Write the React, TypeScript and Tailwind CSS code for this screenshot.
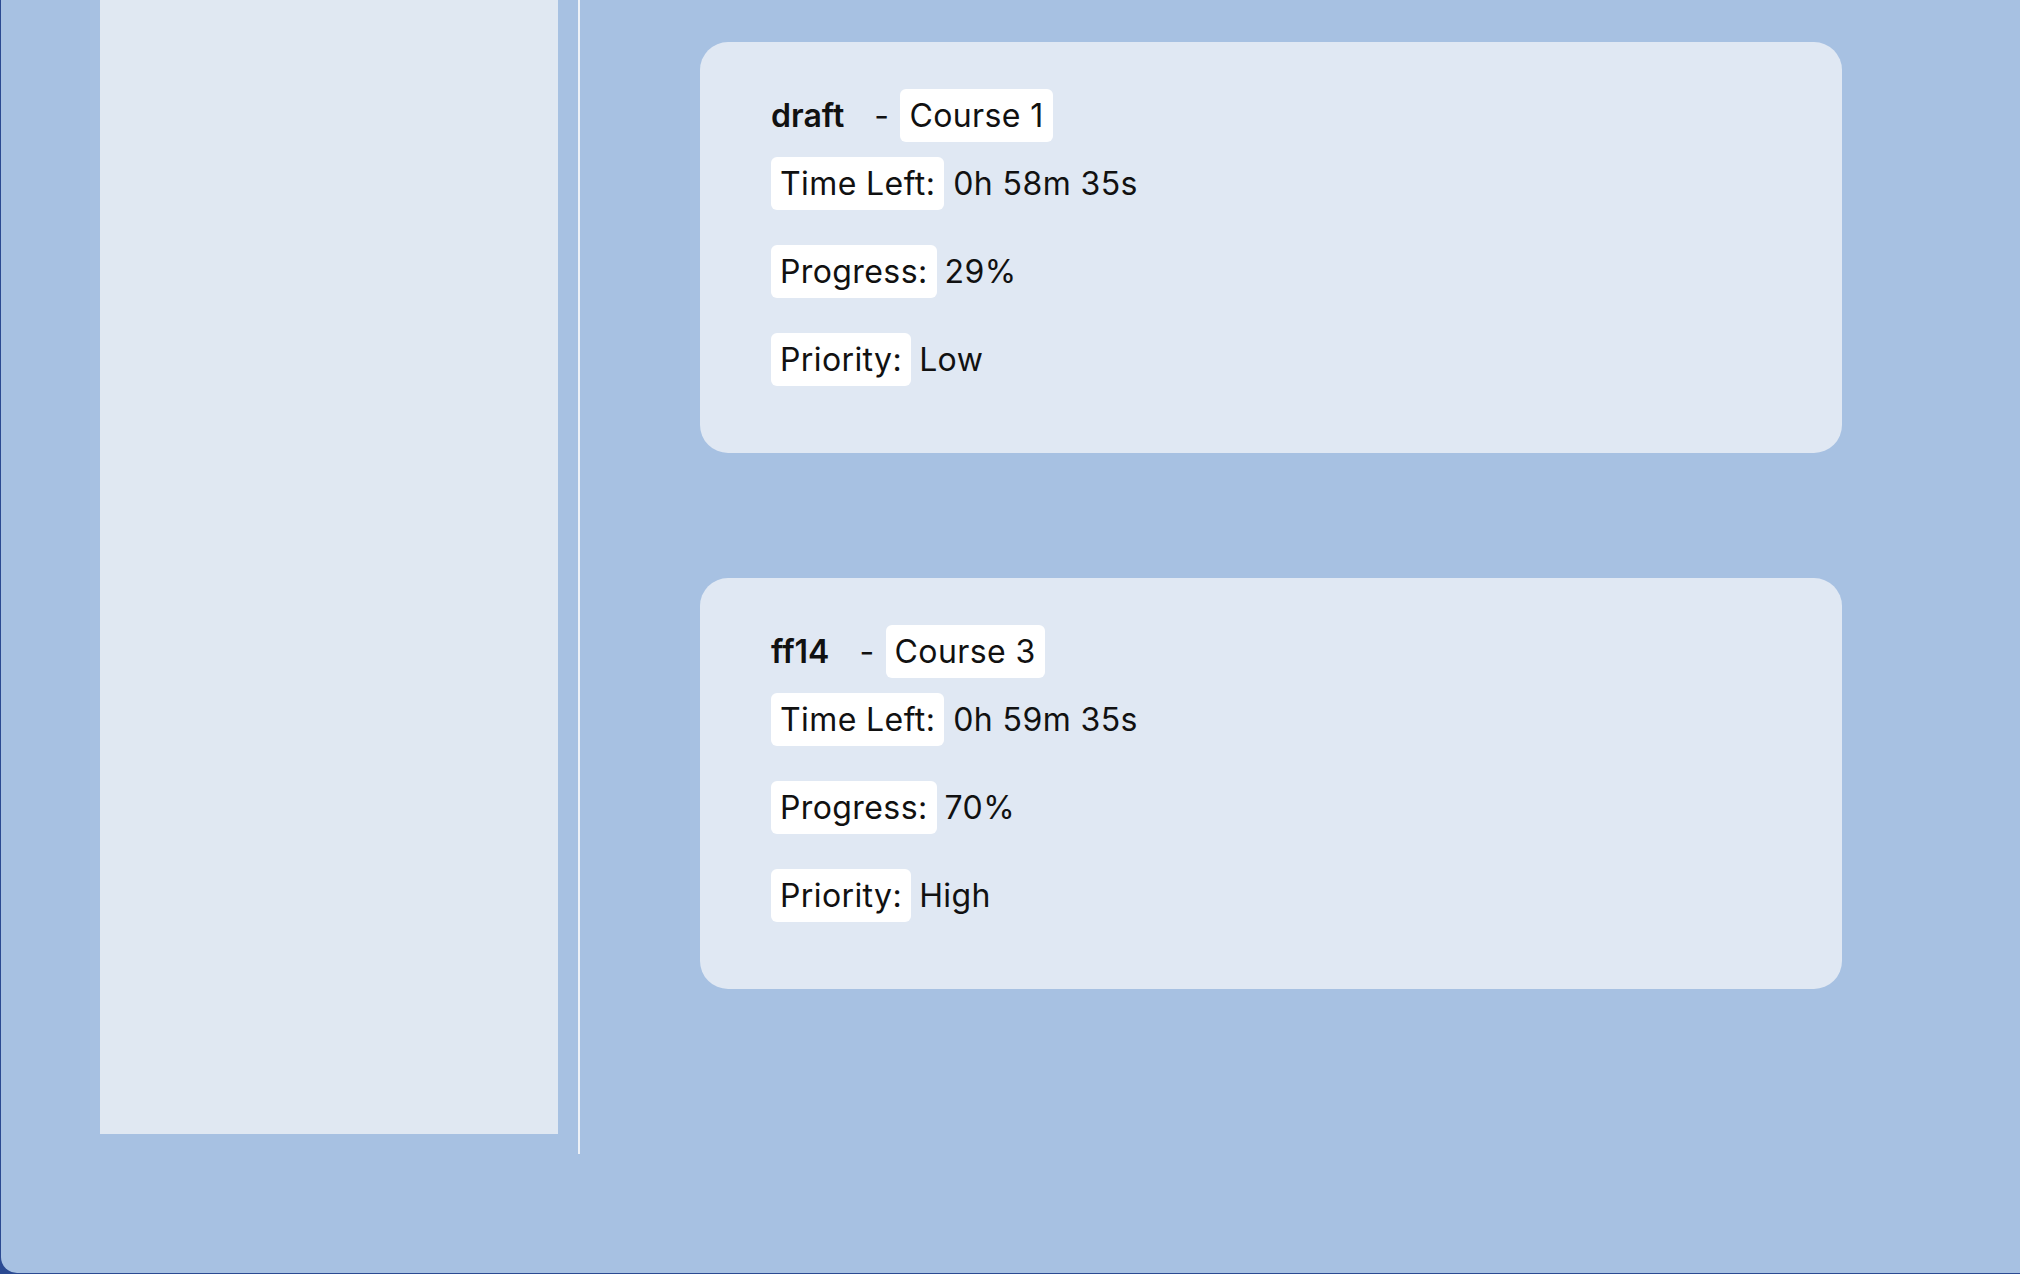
import React from "react";

type Task = {
  name: string;
  course: string;
  timeLeft: string;
  progress: string;
  priority: string;
};

const tasks: Task[] = [
  { name: "draft", course: "Course 1", timeLeft: "0h 58m 35s", progress: "29%", priority: "Low" },
  { name: "ff14", course: "Course 3", timeLeft: "0h 59m 35s", progress: "70%", priority: "High" },
];

function Tag({ children }: { children: React.ReactNode }) {
  return (
    <span className="h-[53px] flex items-center px-[9px] bg-white rounded-[6px]">{children}</span>
  );
}

function TaskCard({ task }: { task: Task }) {
  return (
    <div className="w-[1142px] h-[411px] bg-[#e0e8f3] rounded-[28px] pt-[47px] pl-[71px] flex flex-col items-start">
      <div className="flex items-center">
        <span className="font-semibold tracking-[0px]">{task.name}</span>
        <span className="ml-[30px] mr-[11px]">-</span>
        <Tag>{task.course}</Tag>
      </div>
      <div className="flex items-center mt-[15px]">
        <Tag>Time Left:</Tag>
        <span className="ml-[9px]">{task.timeLeft}</span>
      </div>
      <div className="flex items-center mt-[35px]">
        <Tag>Progress:</Tag>
        <span className="ml-[8px]">{task.progress}</span>
      </div>
      <div className="flex items-center mt-[35px]">
        <Tag>Priority:</Tag>
        <span className="ml-[8px]">{task.priority}</span>
      </div>
    </div>
  );
}

export default function App() {
  return (
    <div className="w-[2020px] h-[1274px] bg-[#2b4a92] overflow-hidden font-['Inter',sans-serif] text-[32px] tracking-[0.4px] text-[#111]">
      <div className="ml-[1px] h-[1273px] bg-[#a7c1e2] rounded-bl-[16px] flex items-start">
        <div className="ml-[99px] w-[458px] h-[1134px] bg-[#e0e8f2]"></div>
        <div className="ml-[20px] w-[2px] h-[1154px] bg-[#edf1f7]"></div>
        <div className="ml-[120px] pt-[42px] flex flex-col gap-[125px]">
          {tasks.map((t) => (
            <TaskCard key={t.name} task={t} />
          ))}
        </div>
      </div>
    </div>
  );
}
